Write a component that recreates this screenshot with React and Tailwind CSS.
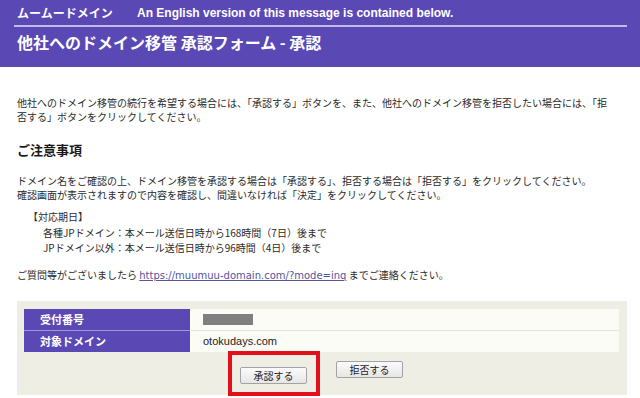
import React from 'react';

const JP = { fontFamily: '"Noto Sans CJK JP", sans-serif' };

const Btn = ({ children }) => (
  <button className="h-[17px] w-[67px] rounded-[2px] border border-[#a3a3a3] bg-gradient-to-b from-[#fbfbfb] to-[#e6e6e6] text-[10px] leading-[15px] text-[#222]">
    {children}
  </button>
);

export default function App() {
  return (
    <div className="h-[398px] w-[640px] overflow-hidden bg-white text-[#2a2a2a]" style={JP}>
      {/* ヘッダー */}
      <div className="h-[67px] bg-[#5a48b5] pl-[14px] pr-[13px] text-white">
        <div className="flex h-[27px] items-center border-b-2 border-[#c2bbe8] pl-[3px] text-[12px] font-bold">
          <span className="w-[120px]">ムームードメイン</span>
          <span style={{ fontFamily: '"Liberation Sans", Arial, sans-serif' }}>
            An English version of this message is contained below.
          </span>
        </div>
        <h1 className="mt-[5px] pl-[3px] text-[16px] font-bold leading-[20px]">
          他社へのドメイン移管 承認フォーム - 承認
        </h1>
      </div>

      {/* 本文 */}
      <div className="px-[17px] pt-[29px]">
        <p className="text-[10px] leading-[14px]">
          他社へのドメイン移管の続行を希望する場合には、「承認する」ボタンを、また、他社へのドメイン移管を拒否したい場合には、「拒
          <br />
          否する」ボタンをクリックしてください。
        </p>

        <h2 className="mt-[17px] text-[13px] font-bold leading-[18px] text-[#1a1a1a]">ご注意事項</h2>

        <p className="mt-[15px] text-[10px] leading-[13.5px]">
          ドメイン名をご確認の上、ドメイン移管を承認する場合は「承認する」、拒否する場合は「拒否する」をクリックしてください。
          <br />
          確認画面が表示されますので内容を確認し、間違いなければ「決定」をクリックしてください。
        </p>

        <div className="mt-[8px] pl-[11px] text-[10px] leading-[15.5px]">
          <div>【対応期日】</div>
          <div className="pl-[15px]">各種JPドメイン：本メール送信日時から168時間（7日）後まで</div>
          <div className="pl-[15px]">JPドメイン以外：本メール送信日時から96時間（4日）後まで</div>
        </div>

        <p className="mt-[12px] text-[10px] leading-[14px]">
          ご質問等がございましたら{' '}
          <a
            href="#"
            className="text-[#55559c] underline"
            style={{ fontFamily: '"DejaVu Sans", sans-serif' }}
          >
            https://muumuu-domain.com/?mode=inq
          </a>{' '}
          までご連絡ください。
        </p>
      </div>

      {/* フォーム */}
      <div className="ml-[17px] mr-[13px] mt-[18px] bg-[#efeee4] pb-[10px] pl-[7px] pr-[8px] pt-[8px]">
        <div className="flex h-[21px]">
          <div className="flex w-[166px] items-center bg-[#5a48b5] pl-[16px] text-[11px] font-bold text-white">受付番号</div>
          <div className="flex flex-1 items-center bg-[#fcfcf7] pl-[13px]">
            <span className="h-[11px] w-[50px] bg-[#808080]" />
          </div>
        </div>
        <div className="flex h-[22px]">
          <div className="flex w-[166px] items-center border-t border-[#a196d8] bg-[#5a48b5] pl-[16px] text-[11px] font-bold text-white">
            対象ドメイン
          </div>
          <div
            className="flex flex-1 items-center border-t border-[#e6e4d8] bg-[#fcfcf7] pl-[13px] text-[11px] text-[#222]"
            style={{ fontFamily: '"Liberation Sans", Arial, sans-serif' }}
          >
            otokudays.com
          </div>
        </div>
        <div className="flex justify-center gap-[29px] pt-[9px]">
          <span className="relative">
            <Btn>承認する</Btn>
            <span className="pointer-events-none absolute -bottom-[11px] -left-[12px] -right-[13px] -top-[10px] border-4 border-[#e3101c]" />
          </span>
          <Btn>拒否する</Btn>
        </div>
      </div>
    </div>
  );
}
